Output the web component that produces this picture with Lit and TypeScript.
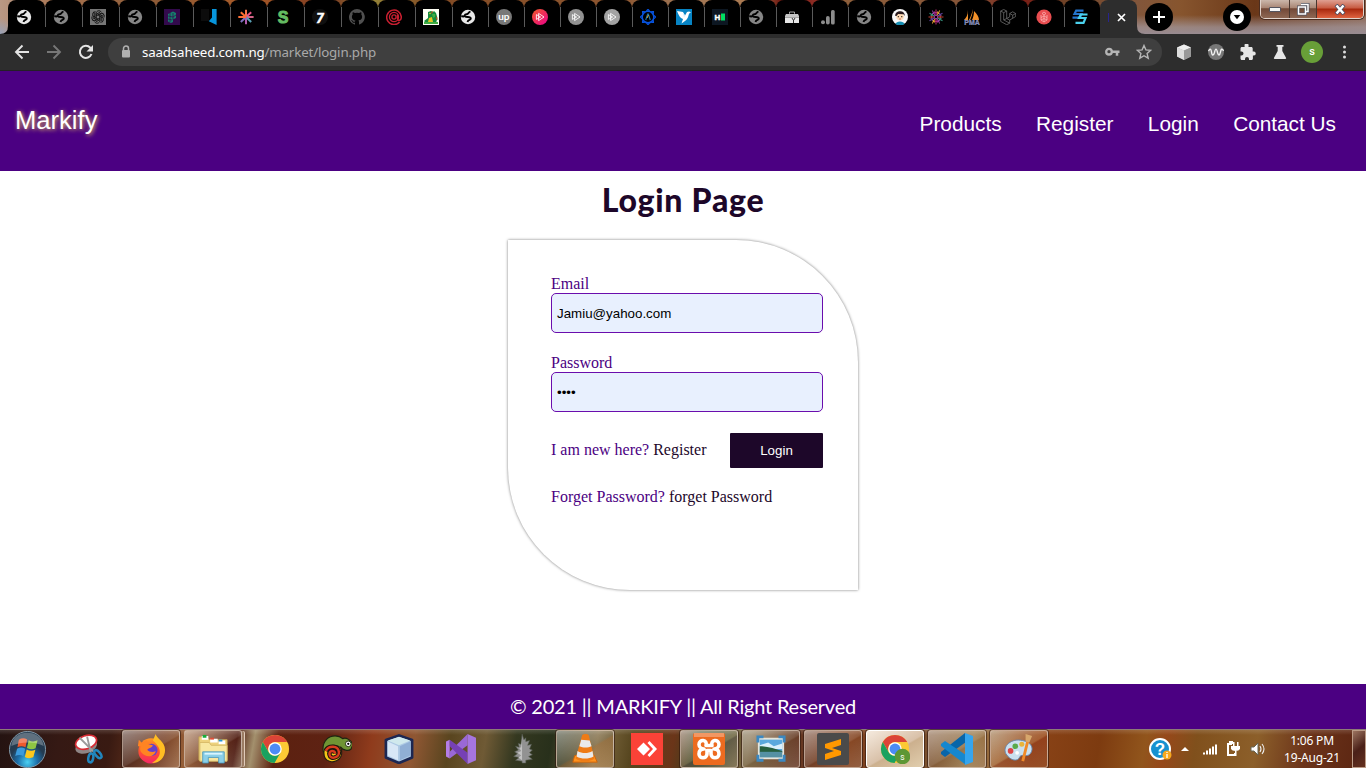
import { LitElement, html, svg, css } from "lit";
import { customElement } from "lit/decorators.js";

const globe = (c: string) => svg`
  <circle cx="8" cy="8" r="7.2" fill="${c}"/>
  <path d="M10.500 2.600C8.200 3 8.800 5.200 6.600 5.300S3.800 7.400 5.800 7.900c2 .4 5-.3 5 1.600 0 1.800-2.600.9-3.300 3.400M1.200 7.200l3 .3" fill="none" stroke="#000" stroke-width="1.900"/>`;
const play = (c: string) => svg`
  <circle cx="8" cy="8" r="8" fill="${c}"/>
  <path d="M6.600 4.400 12 8l-5.400 3.600zM4.400 5.600v4.800M4.400 5.600l4.200 2.400-4.200 2.400" fill="none" stroke="#fff" stroke-opacity=".85" stroke-width="1"/>`;
const petals = (n: number, f: (i: number) => unknown) => Array.from({ length: n }, (_, i) => f(i));

const favicons: unknown[] = [
  globe("#e8e8e8"),
  globe("#868686"),
  svg`<path fill="#777" d="M0 0h16v16H0z"/><g fill="none" stroke="#111" stroke-width="1">${petals(6, (i) => svg`<path transform="rotate(${i * 60} 8 8)" d="M6.200 9V4.500C6.200 1.500 10 .8 11.400 3.300M6.200 5.400 9.800 3.300"/>`)}</g>`,
  globe("#868686"),
  svg`<path fill="#330a4c" d="M0 0h16v16H0z"/><path fill="#14806c" d="m4 5 5-2.600L12 4v5l-3 1.400V13l-2 1-3-1.600z"/><path d="M6 4v9M9 4v7M4 7l5 1 3-2M4 10l4 1" stroke="#330a4c" stroke-width=".7" fill="none"/>`,
  svg`<path fill="#0c0c0c" d="M0 0h8v12H0z"/><path fill="#0795dc" d="M11 0h4.600v16L7.800 12.200 11 8.500z"/>`,
  svg`<g stroke-width="2"><path d="M8 8V.800" stroke="#f8744a"/><path d="m8 8 5.200-4.800" stroke="#e85588"/><path d="M8 8h7.600" stroke="#d46488"/><path d="m8 8 5.200 5" stroke="#59a0b5"/><path d="M8 8v7.300" stroke="#b35cae"/><path d="m8 8-5.200 5" stroke="#7c70be"/><path d="M8 8H.3" stroke="#ff7037"/><path d="M8 8 2.800 3.200" stroke="#ff6d2f"/></g>`,
  svg`<text x="8" y="14" text-anchor="middle" font-size="16" font-weight="900" fill="#64bc62" stroke="#64bc62" font-family="Liberation Sans, sans-serif">S</text>`,
  svg`<circle cx="8" cy="8" r="8" fill="#101010"/><text x="8" y="13.500" text-anchor="middle" font-size="14" font-weight="900" font-style="italic" fill="#fff" stroke="#fff" stroke-width=".5" font-family="Lato, sans-serif">7</text>`,
  svg`<path fill="#505050" d="M8 0a8 8 0 0 0-2.500 15.600c.4 0 .5-.2.5-.4v-1.500c-2.200.5-2.700-1-2.700-1-.4-.9-.9-1.100-.9-1.100-.7-.5.1-.5.1-.5.8.1 1.200.8 1.200.8.7 1.200 1.900.9 2.300.7 0-.5.3-.9.5-1.100-1.800-.2-3.600-.9-3.600-4 0-.9.3-1.600.8-2.100-.1-.2-.4-1 .1-2.100 0 0 .7-.2 2.200.8a7.700 7.700 0 0 1 4 0c1.500-1 2.200-.8 2.200-.8.4 1.100.2 1.900.1 2.100.5.600.8 1.300.8 2.100 0 3.100-1.900 3.700-3.700 3.900.3.300.6.800.6 1.500v2.200c0 .200.1.500.6.400A8 8 0 0 0 8 0z"/>`,
  svg`<g fill="none" stroke="#c91f30" stroke-width="1.500"><path d="M13.600 13A7.300 7.300 0 1 1 15.300 8c0 4-3.300 4-3.700 2.300V5.500"/><circle cx="8" cy="8" r="4.600" stroke-width="1.200"/><circle cx="8" cy="8" r="2.100" stroke-width="1.300"/></g>`,
  svg`<path fill="#fffff4" d="M0 0h16v16H0z"/><path fill="#168c3d" d="m5 3 3-1 2 1 1-1 2 2 1.500 5-1.500 5H3l-2-2 4-3z"/><path fill="#e8c623" d="m6 9 3-1 1 5-3 1-2-1z"/><path fill="#42ad43" d="M9 5h3v3l-2 1zM1 13h14v2H1z"/><path fill="#c94420" d="m8 3 2-1-1 3zm5 4 2 4-2-1z"/><circle cx="7" cy="4.500" r=".8" fill="#e8c623"/>`,
  globe("#e8e8e8"),
  svg`<circle cx="8" cy="8" r="8" fill="#787878"/><text x="7.800" y="10.800" text-anchor="middle" font-size="10" font-weight="700" fill="#fff" font-family="Lato, sans-serif">up</text>`,
  play("url(#pink)"),
  play("#929292"),
  play("#a3a3a3"),
  svg`<g fill="none" stroke="#0753df" stroke-width="1.200"><circle cx="8" cy="8" r="5.800" stroke-width="1.500"/>${petals(8, (i) => svg`<path transform="rotate(${i * 45} 8 8)" d="M6.500 2 8 .3 9.500 2"/>`)}</g><path d="m5.700 11 2-6h.6l2 6" fill="none" stroke="#1c72a8" stroke-width="1.200"/><path d="m7 9 1.500-3" stroke="#dfaa25"/>`,
  svg`<path fill="#0784c4" d="M0 0h16v16H0z"/><path fill="#fff" d="m1 2 6 1 2 3.500L11 3l2-.5 2 .7-1.500 1C12 6 13 9 9 12l-3.500 2.500L7 10C4 9 2.500 6 1 2z"/><path d="m7 4 2 2.500-1 2z" fill="#c9ecff"/>`,
  svg`<path fill="#0d1722" d="M0 0h16v16H0z"/><path fill="#00df63" d="M9 4.500h4v7H9z"/><text x="5.500" y="10.800" text-anchor="middle" font-size="8" font-weight="900" fill="#fff" stroke="#fff" stroke-width=".4" font-family="Liberation Sans, sans-serif">H</text>`,
  globe("#868686"),
  svg`<path fill="#c6c6c6" d="M2 5h12l1 2v7H1V7z"/><path d="M5.500 4.800V3h5v1.800M1 8.500h14" fill="none" stroke="#a5a5a5"/><path fill="#e8e8e8" d="M1 9h14v5H1z"/><path d="m8 9 1.500 2.500L11 9M9.500 11v3" stroke="#333" fill="none"/>`,
  svg`<g fill="#8c8c8c"><circle cx="3" cy="13.300" r="2"/><rect x="6" y="7" width="3.700" height="8.500" rx="1.800"/><rect x="11" y="1" width="3.700" height="14.500" rx="1.600"/></g>`,
  globe("#868686"),
  svg`<circle cx="8" cy="8" r="8" fill="#f8f8f8"/><path d="M3.500 15c.5-3.500 8.500-3.500 9 0A8 8 0 0 1 3.500 15z" fill="#168eb3"/><circle cx="8" cy="7.500" r="3.800" fill="#ffdbb5"/><path d="M3.300 7c-1-5.500 9.500-7 9.500 0l-1.300-1.700-5.300-.3L4.500 7z" fill="#291a1c"/><circle cx="6.300" cy="7.700" r=".6"/><circle cx="9.800" cy="7.700" r=".6"/><path d="M7 10h2" stroke="#b05b4b" stroke-width=".8"/>`,
  svg`${petals(12, (i) => svg`<path transform="rotate(${i * 30} 8 8)" d="M8 6.300V.5M6.600 2.700 8 4.300l1.400-1.600" stroke="${["#d52f84", "#e4a331", "#6447a9", "#d84739", "#389a83", "#9c3ba4"][i % 6]}" stroke-width=".9" fill="none"/>`)}<circle cx="8" cy="8" r="1.800" fill="none" stroke="#9c3ba4"/>`,
  svg`<path fill="#f49229" d="M4 1v10H0c2-2 4-5 4-10zm5-1c-.5 5-1.500 8-3 11H5c2-4 3-7 4-11zm1 2c3 3 5 6 5 9H8c1.500-3 2-6 2-9z"/><text x="8" y="15.800" text-anchor="middle" font-size="7" font-weight="900" fill="#858dbb" stroke="#858dbb" stroke-width=".3" font-family="Liberation Sans, sans-serif">PMA</text>`,
  svg`<path d="m.7 2 3-1.500 3 1.500v7.500l3-1.700V4.500l3-1.700 3 1.700v3L9.700 11v3.200l-3 1.500-6-3.300zm0 0 3 1.700 3-1.700m-3 1.700v7.200l6 3.300M6.700 9.500l3 1.500m0-6.500 3 1.700 3-1.700m-3 1.700v3M3.700 11l3-1.500" fill="none" stroke="#6c6c6c" stroke-width=".8"/>`,
  svg`<circle cx="8" cy="8" r="7.600" fill="#e84d50"/><path d="m8 3-2 1.500L8 6l2-1.500zM5 6v5l3 2 3-2V6M8 6v7M5 8.500 8 7l3 1.500M5 11l3-1.500 3 1.500" fill="none" stroke="#fbb" stroke-width=".7"/>`,
  svg`<path d="M11.500 1.600H4.200L2.500 5h7L8 8.700H.5" fill="none" stroke="#2475ce" stroke-width="2.200"/><path d="M15.500 5.500H8.800L7 9h6.500l-2 4.800h-8" fill="none" stroke="#4bd1ed" stroke-width="2.200"/>`,
];

const chrome = svg`
  <circle cx="16" cy="16" r="15" fill="#fcc934"/>
  <path fill="#db4437" d="M3 8.500a15 15 0 0 1 26 0H16a7.500 7.500 0 0 0-6.600 11z"/>
  <path fill="#1aa260" d="M3 8.500a15 15 0 0 0 12.500 22.500l6.600-11.500c-3 5-10 5-12.700.3z"/>
  <circle cx="16" cy="16" r="7.200" fill="#fff"/><circle cx="16" cy="16" r="5.800" fill="#4c8bf5"/>`;

const apps: { icon: unknown; kind?: string }[] = [
  {
    kind: "start",
    icon: svg`<circle cx="16" cy="16" r="15.600" fill="url(#orb)" stroke="#88a0b0" stroke-width=".8"/>
      <path fill="#ee592e" d="M8.500 7.500c2.500-1.600 5-1.400 7.200-.2L14.300 14c-2.400-1.200-4.700-1.200-7 0z"/><path fill="#8fc643" d="M17 8c2.800 1.500 5 1.300 7.700.1L23 15c-2.600 1.200-5 1-7.500-.4z"/><path fill="#3b9bdc" d="M7 15.300c2.400-1.300 4.600-1.200 7 0l-1.600 6.300c-2.500-1.200-4.600-1.100-7 0z"/><path fill="#fdc71d" d="M15.300 16c2.500 1.500 4.800 1.500 7.500.3L21 22.800c-2.700 1.100-5 .9-7.300-.4z"/>
      <path fill="#fff" opacity=".27" d="M2 13C3 3 13 0 20 2s9 6 10 11C22 9 11 9 2 13z"/>`,
  },
  {
    icon: svg`<ellipse cx="13" cy="13" rx="12" ry="7" fill="#8e8585" transform="rotate(-20 14 13)"/><ellipse cx="13" cy="8.500" rx="11.500" ry="7" fill="#fff" stroke="#d72d35" stroke-width="1.800" transform="rotate(-18 14 9)"/><path d="m6 4 15 15M14 3l4 17" stroke="#9b9b9b" stroke-width="2"/><g fill="none" stroke="#2186bd" stroke-width="2.700"><ellipse cx="18" cy="25.500" rx="2.600" ry="4.800" transform="rotate(10 18 25)"/><ellipse cx="25.500" cy="21.500" rx="2.500" ry="5" transform="rotate(-40 25.500 21.500)"/></g>`,
  },
  {
    kind: "open",
    icon: svg`<circle cx="16" cy="18" r="13.500" fill="url(#fox)"/><path fill="#ffbd23" d="M18 7 21 0c1 5 10 8 10 17 0 8-6 14-14 14 9-5 13-14 1-24z"/><circle cx="16.500" cy="17" r="6.500" fill="#6740ca"/><path fill="#ff8422" d="m2 13 1-7 4 4 4-4 2 5 5 1c-1 3-5 3-6 5 2 2 6 3 9 1-1 6-10 8-15 2-2-2-2-5-1-7z"/>`,
  },
  {
    kind: "open stack",
    icon: svg`<path fill="#eed27c" stroke="#c2a252" d="M1 3h9l2 3h19v22H1z"/><path fill="#fff" d="M4 2h7v4H4zm9 3h8v4h-8zm9 2h7v4h-7z"/><path fill="#16ad3a" d="M5 1h4v3H5z"/><path fill="#e24d37" d="M13 4h4v2h-4z"/><path fill="#2494d4" d="M22 6h4v2h-4z"/><path fill="#f8e7a0" stroke="#d5b966" d="M2 9h10l2 3h17v17H2z"/><path fill="#8bcfe8" stroke="#3f91ba" stroke-width=".8" d="M5 19h23v12h-6v-6H11v6H5z"/><path fill="#d9f5ff" d="M7 20h19v2H7z"/>`,
  },
  { icon: chrome },
  {
    icon: svg`<path fill="#6f9434" stroke="#1f2512" stroke-width="1.200" d="M1 16C1 7 7 2 14 2c4 0 6 1 8 3 4-2 9 2 11 6l-2 5c-3 3-9 1-11-2-2 2-6 2-8 3l-5 6c-4 0-6-3-6-7z"/><path fill="#f3c617" stroke="#241c10" stroke-width="1.200" d="M2 20c0-7 6-8 11-8 6 0 9 4 8 9-1 7-8 10-13 8-4-1-6-5-6-9z"/><path d="M4 18c3-6 13-6 14 1 1 6-9 9-10 3-1-5 6-5 6-1" fill="none" stroke="#20150d" stroke-width="4.800"/><path d="M4 18c3-6 13-6 14 1 1 6-9 9-10 3-1-5 6-5 6-1" fill="none" stroke="#d93c1e" stroke-width="2.600"/><circle cx="28" cy="10.500" r="3" fill="#fff" stroke="#243010"/><circle cx="28" cy="10.500" r="1.200"/>`,
  },
  {
    icon: svg`<path fill="#adc9e4" stroke="#1c2752" stroke-width="2.800" stroke-linejoin="round" d="m16 1.500 14 5V25l-14 6-14-6V6.500z"/><path fill="#d0e9ed" d="m4 7 12-4 12 4-12 5z"/><path fill="#d8e7f6" d="M4 8l11 5v15L4 23z"/><path fill="#90afd5" d="M17 13l11-5v15l-11 5z"/>`,
  },
  {
    icon: svg`<path fill="#b47de8" d="m0 8 4-2v20l-4-2z"/><path fill="#9a68d6" d="M4 26v-7L23 0v12z"/><path fill="#7641b5" d="M4 6v7l19 19V20z"/><path fill="#a675df" d="m23 0 9 4v24l-9 4z"/>`,
  },
  {
    icon: svg`<path fill="#929292" stroke="#535b4f" stroke-width=".6" d="m15 0 2 6 2-2v4l4-1-2 5 4-1-2 5 3 1-3 3 3 2-4 2 4 3-7 1v3h-4v-2l-7-1 4-3-6-1 4-3-3-2 4-2-3-4 4 1-1-4 3 1z"/><path fill="#c2c2c2" d="M15 4v24l-4-3 3-2-4-3 4-2-2-3 2-1z"/>`,
  },
  {
    kind: "open warm",
    icon: svg`<path fill="#ff931e" stroke="#ce6309" d="m5 23-2 7h26l-3-7z"/><path fill="#ee7b16" d="m13 1 2-1h3l2 1 6 25c-4 4-16 4-20 0z"/><path fill="#eaeaea" d="m12 6 9 1 2 6c-4 2-9 2-13 0zM8 18c5 3 11 3 16 0l1 6c-5 3-13 3-18 0z"/>`,
  },
  {
    kind: "big",
    icon: svg`<path fill="#fb4237" d="M0 0h32v32H0z"/><path fill="#fff" d="m6 16 6.500-6.500L19 16l-6.500 6.500zm10.500-6 2-2 7.500 8-7.500 8-2-2 5.500-6z"/>`,
  },
  {
    kind: "open green big",
    icon: svg`<rect width="32" height="32" rx="2" fill="#ed6b20"/><path fill="#fff" opacity=".3" d="M1 0h30v4H1z"/><path d="M13 12.500c2-6-7-7-7-1 0 3 3 4.500 5 4.500-4 0-5 2.500-5 5 0 5 8 5 8 0v-3.500h4V21c0 5 8 5 8 0 0-2.500-1-5-5-5 2 0 5-1.500 5-4.500 0-6-9-5-7 1z" fill="none" stroke="#fff" stroke-width="3.600" stroke-linejoin="round"/>`,
  },
  {
    kind: "open",
    icon: svg`<path fill="#eee" stroke="#e5e5dc" stroke-width="2" d="M3 5h26v21H3z"/><path fill="#5aa8de" d="M4 6h24v13H4z"/><path fill="#d9effc" d="m4 12 9-3 6 4 9-3v6H4z"/><path fill="#265f40" d="M4 13c9 0 16 3 24 5v2H4z"/><path fill="#5591a4" d="M4 19h24v6H4z"/><path fill="none" stroke="#3b88c1" stroke-width="3" d="M2 9V3h6M24 3h6v6M2 22v6h6m16 0h6v-6"/>`,
  },
  {
    kind: "open big",
    icon: svg`<rect width="32" height="32" rx="2" fill="#4a4a4a"/><path fill="#ff9800" d="m8 11 16-5v6l-9 3 9 3v4L8 27v-6l9-3-9-3z"/>`,
  },
  {
    kind: "active",
    icon: svg`${chrome}<circle cx="24" cy="24" r="8.300" fill="#5d9734"/><text x="24" y="27.500" text-anchor="middle" font-size="9" fill="#fff" font-family="Roboto, sans-serif">s</text>`,
  },
  {
    kind: "open big",
    icon: svg`<path fill="#0865a9" d="m24 0 1 9L4 24l-4-3v-2z"/><path fill="#1687ce" d="m4 8-4 3v2l25 19V22z"/><path fill="#35a5ee" d="m24 0 8 3v26l-8 3z"/>`,
  },
  {
    kind: "open red",
    icon: svg`<path fill="#cae0ef" stroke="#6686ad" d="M2 21C-2 13 8 4 20 7c10 2 12 9 8 14-3 4-8 0-11 3-2 6-10 5-15-3z"/><circle cx="7" cy="18" r="3" fill="#dd4545"/><circle cx="12" cy="13" r="3" fill="#58aa4a"/><circle cx="19" cy="11" r="2.700" fill="#e9b43a"/><circle cx="14" cy="20" r="2" fill="#fff"/><path d="M26 5 20 29" stroke="#f08a28" stroke-width="3"/><path fill="#d7a76c" d="m23 0 7 2-3 7-4-1z"/>`,
  },
];

@customElement("app-root")
export class AppRoot extends LitElement {
  static styles = css`
    :host { display: flex; flex-direction: column; width: 1366px; height: 768px; overflow: hidden; background: #fff; font-family: "Liberation Sans", Arial, sans-serif; }
    * { box-sizing: border-box; }
    svg { display: block; flex: none; }
    .defs { position: absolute; width: 0; height: 0; }
    .tabs { display: flex; flex: none; height: 34px; background:
      linear-gradient(transparent 15px, #a2989fb8 27px, #988b91) 1137px 0 / 229px 34px no-repeat,
      radial-gradient(circle at 0 34px, #98a2b8, transparent 16px),
      linear-gradient(90deg, #b99884 0, #a97450 60px, #8c5b37 150px, #a95a27 250px, #7b3a22 330px, #938137 375px, #834b24 430px, #8d5630 620px, #9e7555 680px, #ad7b51 755px, #701a12 780px, #932e26 820px, #8e5f3b 845px, #845337 980px, #7c1612 1015px, #704327 1065px, #82563b 1137px, #87552e 1180px, #6a3718 1255px, #8d6550 1366px); }
    .tab { display: flex; align-items: center; width: 37px; height: 34px; padding-left: 8px; background: #000; border-radius: 8px 8px 0 0; }
    .tab.narrow { width: 36px; }
    .tab.last { border-bottom-right-radius: 8px; }
    .tab::after { content: ""; position: relative; z-index: 1; width: 1px; height: 20px; margin: 0 -1px 0 auto; background: #5a5a5a; }
    .tab.last::after { background: none; }
    .fill { display: flex; background: linear-gradient(#0000 9px, #000 9px); }
    .fill:last-of-type { background: none; }
    .current { display: flex; align-items: center; gap: 8px; width: 37px; height: 34px; padding-left: 8px; background: #2d2d2d; border-radius: 8px 8px 0 0; }
    .sliver { width: 1px; height: 9px; background: #28248f; }
    .flare { align-self: flex-end; }
    .round { display: grid; place-items: center; width: 28px; height: 28px; margin: 3px 0 0; border-radius: 50%; background: #000; }
    .round.drop { margin-left: 50px; }
    .win { display: flex; height: 19px; margin-left: 9px; border: 1px solid #e2d4cc; border-top: 0; border-radius: 0 0 5px 5px; overflow: hidden; box-shadow: 0 0 0 1px #4b2d20; }
    .win span { display: grid; place-items: center; width: 29px; height: 18px; background: linear-gradient(#cbb7ab, #a78472 45%, #724837 48%, #8d6753); border-right: 1px solid #49372f; }
    .win span.mid { width: 27px; }
    .win span.close { width: 46px; border: 0; background: linear-gradient(#dfa092, #c75a40 45%, #a8280d 50%, #df6340); }
    .toolbar { display: flex; align-items: center; flex: none; height: 37px; padding: 0 13px 1px 14px; background: #2d2d2d; border-bottom: 1px solid #242026; }
    .nav-icons { display: flex; gap: 16px; width: 94px; }
    .omni { display: flex; align-items: center; width: 1054px; height: 28px; padding: 0 10px 0 12px; border-radius: 14px; background: #3f3f3f; }
    .url { margin-left: 10px; color: #a9a9a9; font: 13.330px/20px "Noto Sans", "Open Sans", sans-serif; letter-spacing: -0.170px; flex: 1; white-space: nowrap; }
    .url b { color: #fff; font-weight: 400; }
    .omni svg + svg { margin-left: 16px; }
    .ext { display: flex; align-items: center; gap: 16px; margin-left: 14px; }
    .avatar { display: grid; place-items: center; width: 22px; height: 22px; margin: 0 -3px; border-radius: 50%; background: #689f38; color: #fff; font: 500 11px Roboto, sans-serif; }
    header { display: flex; justify-content: space-between; flex: none; height: 100px; padding: 0 30px 0 15px; background: #4b0082; color: #fff; }
    .brand { font-size: 25.600px; line-height: 30px; margin-top: 34px; text-shadow: 1px 1px 4px #e8c85e; }
    nav { display: flex; gap: 34.400px; margin-top: 41px; font-size: 20.800px; line-height: 24px; }
    main { display: flex; flex-direction: column; align-items: center; flex: none; height: 513px; background: #fff; }
    h1 { margin: 9px 0 20px; height: 40px; font: 900 32px/40px Lato, sans-serif; letter-spacing: 0.750px; color: #1d0729; white-space: nowrap; }
    form { display: flex; flex-direction: column; width: 350px; height: 350px; padding: 35px 35px 0 43px; border-radius: 0 122px 0 122px; box-shadow: 0 0 3px #777; color: #4b0082; font: 16px/18px "Liberation Serif", "Times New Roman", serif; }
    .input { display: flex; align-items: center; height: 40px; margin-bottom: 21px; padding: 2px 5px 0; border: 1px solid #6a0dad; border-radius: 5px; background: #e8f0fe; color: #000; font: 13.333px/16px "Liberation Sans", Arial, sans-serif; }
    .row { display: flex; justify-content: space-between; align-items: center; height: 35px; margin-bottom: 20px; }
    .row span { padding-bottom: 2px; }
    a { color: #1d0729; }
    button { width: 93px; height: 35px; padding: 0; border: 0; border-radius: 1px; background: #1d0729; color: #fff; font: 13.333px "Liberation Sans", Arial, sans-serif; }
    footer { flex: none; height: 45px; background: #4b0082; color: #fff; text-align: center; font: 20px/44px Lato, sans-serif; letter-spacing: -0.210px; white-space: nowrap; }
    .taskbar { display: flex; flex: none; height: 39px; border-top: 1px solid #8c7a75; gap: 4px; background:
      linear-gradient(#ffffff24, transparent 5px),
      linear-gradient(100deg, #241311 0, #351914 60px, #391a12 110px, #723a20 160px, #965f38 185px, #4e1b10 235px, #a3906d 252px, #5c2110 275px, #5e2213 325px, #8f3b1c 368px, #8f5733 410px, #59451f 445px, #6f5a35 480px, #343820 510px, #28301b 545px, #806b43 590px, #57461f 625px, #6b3519 665px, #3b401d 690px, #78633f 740px, #653722 790px, #84431f 840px, #6e4022 900px, #9a794b 960px, #8a4317 1020px, #7d3b10 1085px, #91551c 1130px, #96481a 1150px, #80501c 1180px, #8c5f2a 1240px, #6b331a 1290px, #56210f 1366px); }
    .app { display: grid; place-items: center; width: 58px; height: 38px; border-radius: 3px; flex: none; }
    .open, .active { border: 1px solid #dac8baaa; box-shadow: 0 0 0 1px #2e170f99; background: linear-gradient(150deg, #ffffff78, #ffffff22 52%, #ffffff08 55%, #ffffff28); }
    .warm { background: linear-gradient(150deg, #fff7, #fff2 52%, #e9a06544 55%, #f3bf8c66); }
    .green { background: linear-gradient(150deg, #fff8, #b8bda355 52%, #6666 55%, #b9b39e55); }
    .red { background: linear-gradient(150deg, #fff6, #f8b58b44 52%, #a9402b55 55%, #c27b5b44); }
    .active { border-color: #fff; background: linear-gradient(150deg, #f5eade, #d9c1a9 52%, #ccb08e 55%, #e1ceae); }
    .app svg { width: 30px; height: 30px; }
    .app.big svg { width: 32px; height: 32px; }
    .app.start { width: 56px; padding-right: 2px; }
    .app.start svg { width: 37px; height: 37px; }
    .stack { box-shadow: 3px 0 0 -1px #9b7c64, 4px 0 0 -1px #e0cbb9; }
    .tray { display: flex; align-items: center; margin-left: auto; }
    .clock { width: 80px; margin-left: 3px; color: #fff; text-align: center; font: 12px/17px "Noto Sans", sans-serif; letter-spacing: -0.200px; white-space: nowrap; }
    .desktop { width: 14px; height: 38px; border: 1px solid #bc9c87; background: linear-gradient(140deg, #9c7460, #4a2018 50%, #64301f); }
  `;

  render() {
    return html`
      <svg class="defs"><defs>
        <linearGradient id="pink" x2="1" y2="1"><stop stop-color="#f05a28"/><stop offset="1" stop-color="#ec008c"/></linearGradient>
        <radialGradient id="orb" cy=".85"><stop stop-color="#4bd0f2"/><stop offset=".55" stop-color="#1c6faa"/><stop offset="1" stop-color="#243b50"/></radialGradient>
        <linearGradient id="fox" x2="0" y2="1"><stop stop-color="#ff9a22"/><stop offset=".5" stop-color="#ff5230"/><stop offset="1" stop-color="#f52567"/></linearGradient>
      </defs></svg>
      <div class="tabs">
        <svg class="flare" width="8" height="8"><path d="M8 0v8H0Q8 8 8 0z" fill="#000"/></svg>
        ${favicons.map((icon, i) => html`<div class="fill"><div class="tab ${i > 11 ? "narrow" : ""} ${i === 29 ? "last" : ""}">${this.glyph(icon, 16)}</div></div>`)}
        <div class="current"><i class="sliver"></i>${this.glyph(svg`<path d="m1 1 7 7m0-7L1 8" stroke="#fff" stroke-width="1.700"/>`, 9)}</div>
        <svg class="flare" width="8" height="8"><path d="M0 0v8h8Q0 8 0 0z" fill="#2d2d2d"/></svg>
        <div class="round">${this.glyph(svg`<path d="M6 0v12M0 6h12" stroke="#fff" stroke-width="2"/>`, 12)}</div>
        <div class="round drop">${this.glyph(svg`<circle cx="7" cy="7" r="7" fill="#fff"/><path d="M3.700 5h6.600L7 9.300z"/>`, 14)}</div>
        <div class="win">
          <span><svg width="12" height="5"><path d="M.5.500h11v4H.5z" fill="#f5f5f5" stroke="#54545e"/></svg></span>
          <span class="mid">${this.glyph(svg`<path d="M4 1.500h7v7H9M1.500 4h7v7h-7z" fill="none" stroke="#4f4f5a" stroke-width="3"/><path d="M4 1.500h7v7H9M1.500 4h7v7h-7z" fill="none" stroke="#fff" stroke-width="1.500"/>`, 13)}</span>
          <span class="close"><svg width="12" height="11"><path d="m2 1 8 9m0-9-8 9" stroke="#4a4c60" stroke-width="4"/><path d="m2.500 1.500 7 8m0-8-7 8" stroke="#fff" stroke-width="2.500"/></svg></span>
        </div>
      </div>
      <div class="toolbar">
        <div class="nav-icons">
          ${this.glyph(svg`<path d="M15 8H2m6.500-6.500L2 8l6.500 6.500" fill="none" stroke="#e4e4e4" stroke-width="1.900"/>`, 16)}
          ${this.glyph(svg`<path d="M1 8h13M7.500 1.500 14 8l-6.500 6.500" fill="none" stroke="#777" stroke-width="1.900"/>`, 16)}
          ${this.glyph(svg`<path d="M13.500 10A6 6 0 1 1 12.300 3.800L14 5.500" fill="none" stroke="#e4e4e4" stroke-width="2"/><path d="M15 1v6.500H8.500z" fill="#e4e4e4"/>`, 16)}
        </div>
        <div class="omni">
          <svg width="12" height="14"><path d="M3.500 5V3.500a2.500 2.500 0 0 1 5 0V5" fill="none" stroke="#b0b0b0" stroke-width="1.500"/><rect x="2" y="5" width="8" height="7.500" rx="1" fill="#b0b0b0"/></svg>
          <div class="url"><b>saadsaheed.com.ng</b>/market/login.php</div>
          ${this.glyph(svg`<circle cx="5" cy="7.700" r="2.800" fill="none" stroke="#b5b5b5" stroke-width="2.300"/><path d="M8 7.700h7.500M13 7.700v4" stroke="#b5b5b5" stroke-width="2.500"/>`, 16)}
          ${this.glyph(svg`<path d="m8 1.500 1.900 4.400 4.800.4-3.600 3.200 1.100 4.700L8 11.700l-4.200 2.500 1.100-4.700-3.600-3.200 4.800-.4z" fill="none" stroke="#b5b5b5" stroke-width="1.400"/>`, 16)}
        </div>
        <div class="ext">
          ${this.glyph(svg`<path d="m8 .5 7 3v9L8 16l-7-3.500v-9z" fill="#aaa"/><path d="m8 .5 7 3L8 6.500l-7-3z" fill="#eee"/><path d="m1 3.500 7 3V16l-7-3.500z" fill="#ddd"/><path d="m8 6.500 7-3v9L8 16z" fill="#999"/>`, 16)}
          ${this.glyph(svg`<circle cx="8" cy="8" r="8" fill="#777"/><path d="M.5 7c2-3 2.500-2 3 1 .5 4 2 4 3 .5C7.500 4 8.500 4 9.500 8.500c1 3.500 2 3.500 3-.5.500-3 1.500-4 3-1" fill="none" stroke="#f2f2f2" stroke-width="1.400"/>`, 16)}
          ${this.glyph(svg`<path d="M13.700 7.600h-1V4.500c0-.8-.6-1.500-1.400-1.500H8.500V2a2 2 0 1 0-3.900 0v1H2C1 3 .5 3.700.5 4.500v3h1a2 2 0 1 1 0 4h-1v3c0 .8.600 1.500 1.500 1.500h3v-1a2 2 0 1 1 4 0v1h2.500c.8 0 1.400-.7 1.400-1.500v-3h1a1.900 1.900 0 0 0-.2-3.900z" fill="#e6e6e6"/>`, 16)}
          ${this.glyph(svg`<path d="M4.500 1h7v1.800h-1.200V7L14 13.800c.4.700 0 1.200-.6 1.200H2.600c-.6 0-1-.5-.6-1.200L5.700 7V2.800H4.500z" fill="#e6e6e6"/>`, 16)}
          <div class="avatar">s</div>
          ${this.glyph(svg`<g fill="#ddd"><circle cx="8.500" cy="3" r="1.500"/><circle cx="8.500" cy="8" r="1.500"/><circle cx="8.500" cy="13" r="1.500"/></g>`, 16)}
        </div>
      </div>
      <header>
        <div class="brand">Markify</div>
        <nav><span>Products</span><span>Register</span><span>Login</span><span>Contact Us</span></nav>
      </header>
      <main>
        <h1>Login Page</h1>
        <form>
          <label>Email</label><div class="input">Jamiu@yahoo.com</div>
          <label>Password</label><div class="input">••••</div>
          <div class="row"><span>I am new here? <a>Register</a></span><button type="button">Login</button></div>
          <div>Forget Password? <a>forget Password</a></div>
        </form>
      </main>
      <footer>© 2021 || MARKIFY || All Right Reserved</footer>
      <div class="taskbar">
        ${apps.map((a) => html`<div class="app ${a.kind ?? ""}"><svg viewBox="0 0 32 32">${a.icon}</svg></div>`)}
        <div class="tray">
          <svg width="120" height="24">
            <circle cx="11" cy="12" r="10" fill="#1691d0" stroke="#fff" stroke-width="2"/>
            <text x="11" y="18" text-anchor="middle" font-size="17" font-weight="700" fill="#fff" font-family="Liberation Sans, sans-serif">?</text>
            <circle cx="18" cy="18" r="4.500" fill="#f8a81c"/><path d="M18 15v1m0 1v4" stroke="#fff" stroke-width="1.300"/>
            <path d="m32 14 4-4 4 4z" fill="#fff"/>
            <path d="M55 15.500v2m3-4v4m3-6v6m3-8v8m3-10v10" stroke="#fff" stroke-width="2"/>
            <path d="M83 7h-4v11h7v-2M80 5h3v2" fill="none" stroke="#fff" stroke-width="2"/><path d="M82 9h9v3q-1 2-4.500 2T82 12zM84 5h1.500v4H84zm4 0h1.500v4H88zM86 13h1.500v6H86z" fill="#fff"/>
            <path d="M102 10h3l4-4v12l-4-4h-3z" fill="#fff" stroke="#665"/><path d="M111 9q2 3 0 6m2-8q4 5 0 10" fill="none" stroke="#eee" stroke-width="1.100"/>
          </svg>
          <div class="clock">1:06 PM<br />19-Aug-21</div>
          <div class="desktop"></div>
        </div>
      </div>
    `;
  }

  private glyph(icon: unknown, size: number) {
    return html`<svg width="${size}" height="${size}" viewBox="0 0 ${size} ${size}">${icon}</svg>`;
  }
}
